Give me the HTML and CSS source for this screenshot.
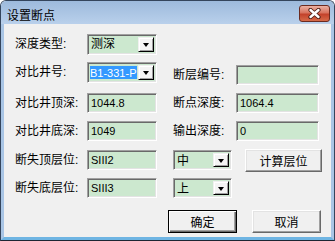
FILE: index.html
```html
<!DOCTYPE html>
<html lang="zh-CN">
<head>
    <meta charset="UTF-8">
    <title>设置断点</title>
    <link rel="stylesheet" href="styles.css">
</head>
<body>
<div class="dialog">
    <!--标题栏-->
    <div class="titlebar">
        <span class="title">设置断点</span>
        <span class="close">
            <svg width="13" height="11" viewBox="0 0 13 11">
                <path d="M2.5 2 L10.5 9 M10.5 2 L2.5 9" stroke="#4a1c14" stroke-width="4.2" stroke-linecap="round"/>
                <path d="M2.5 2 L10.5 9 M10.5 2 L2.5 9" stroke="#fff" stroke-width="2.4" stroke-linecap="round"/>
            </svg>
        </span>
    </div>
    <!--客户区-->
    <div class="client">
        <div class="form">
            <span class="lab">深度类型:</span>
            <div class="combo"><span class="val">测深</span><span class="drop"></span></div>

            <span class="lab">对比井号:</span>
            <div class="combo"><span class="val sel">B1-331-P2</span><span class="drop"></span></div>
            <span class="lab c4 low">断层编号:</span>
            <div class="edit wide low"></div>

            <span class="lab">对比井顶深:</span>
            <div class="edit">1044.8</div>
            <span class="lab c4">断点深度:</span>
            <div class="edit wide">1064.4</div>

            <span class="lab">对比井底深:</span>
            <div class="edit">1049</div>
            <span class="lab c4">输出深度:</span>
            <div class="edit wide">0</div>

            <span class="lab">断失顶层位:</span>
            <div class="edit">SIII2</div>
            <div class="combo small c4"><span class="val">中</span><span class="drop"></span></div>
            <button class="btn calc">计算层位</button>

            <span class="lab">断失底层位:</span>
            <div class="edit">SIII3</div>
            <div class="combo small c4"><span class="val">上</span><span class="drop"></span></div>
        </div>
        <div class="actions">
            <button class="btn default">确定</button>
            <button class="btn">取消</button>
        </div>
    </div>
</div>
</body>
</html>
```

FILE: styles.css
```css
html,
body {
    margin: 0;
    padding: 0;
}
body {
    font-family: "Liberation Sans", "Noto Sans CJK SC", sans-serif;
    font-size: 12px;
    color: #000;
}
.dialog {
    width: 335px;
    height: 241px;
    box-sizing: border-box;
    border: 1px solid #34455c;
    border-bottom-color: #1d2633;
    border-radius: 6px 6px 0 0;
    display: flex;
    flex-direction: column;
    overflow: hidden;
}
.titlebar {
    height: 23px;
    background: linear-gradient(#9dbadc, #b9d0eb);
    display: flex;
    justify-content: space-between;
    align-items: flex-start;
}
.title {
    padding: 9px 0 0 6px;
    line-height: 12px;
    font-size: 12px;
}
.close {
    width: 29px;
    height: 15px;
    margin: 4px 4px 0 0;
    border: 1px solid #6b2a1f;
    border-radius: 3px;
    background: linear-gradient(#eab0a2 0%, #d8735e 45%, #c3422b 55%, #d66a48 100%);
    display: flex;
    align-items: center;
    justify-content: center;
}
.client {
    flex: 1;
    background: #f0f0f0;
    border: 3px solid #a9c5e5;
    border-top: 0;
    border-bottom-color: #6fb5e3;
}
.form {
    display: grid;
    grid-template-columns: 72px 70px 16px 63px 86px;
    grid-template-rows: 28px 31px 28px 29px 28px 21px;
    align-items: start;
    padding: 10px 0 0 11px;
}
.lab {
    grid-column: 1;
    line-height: 20px;
    white-space: nowrap;
}
.lab.c4,
.c4 {
    grid-column: 4;
}
.low {
    margin-top: 3px;
}
/*下沉边框*/
.edit,
.combo {
    box-sizing: border-box;
    border: 1px solid;
    border-color: #a0a0a0 #fff #fff #a0a0a0;
    box-shadow: inset 1px 1px #696969, inset -1px -1px #e3e3e3;
    background: #cce8cf;
}
.edit {
    width: 70px;
    height: 20px;
    line-height: 18px;
    padding: 0 3px;
    font-size: 11px;
}
.edit.wide {
    width: 83px;
}
.combo {
    width: 70px;
    height: 21px;
    display: flex;
    padding: 2px;
}
.combo.small {
    width: 59px;
    height: 20px;
}
.combo .val {
    flex: 1;
    min-width: 0;
    overflow: hidden;
    white-space: nowrap;
    line-height: 15px;
    margin: 0 1px 0 0;
    padding-left: 1px;
}
.combo .val.sel {
    background: #3399ff;
    color: #fff;
    margin: 1px 1px 1px 0;
    line-height: 15px;
    padding-left: 0;
    font-size: 11px;
}
.combo.small .val {
    line-height: 16px;
}
.drop {
    flex: 0 0 16px;
    width: 16px;
    box-sizing: border-box;
    background: #f4f4f4;
    border: 1px solid;
    border-color: #f0f0f0 #000 #000 #f0f0f0;
    box-shadow: inset 1px 1px #fff, inset -1px -1px #a0a0a0;
    display: flex;
    align-items: center;
    justify-content: center;
}
.drop::after {
    content: "";
    border-left: 3.5px solid transparent;
    border-right: 3.5px solid transparent;
    border-top: 4px solid #000;
    margin-top: 1px;
}
/*凸起按钮*/
.btn {
    box-sizing: border-box;
    width: 69px;
    height: 23px;
    padding: 0;
    font: inherit;
    color: #000;
    background: #f0f0f0;
    border: 1px solid;
    border-color: #fff #696969 #696969 #fff;
    box-shadow: inset -1px -1px #a0a0a0, inset 1px 1px #e3e3e3;
    border-radius: 0;
}
.btn.default {
    border-color: #000;
    box-shadow: inset 1px 1px #fff, inset -1px -1px #696969, inset -2px -2px #a0a0a0;
}
.btn.calc {
    width: 77px;
    margin: -1px 0 0 9px;
}
.actions {
    display: flex;
    justify-content: flex-end;
    gap: 15px;
    padding: 11px 10px 0 0;
}
```
